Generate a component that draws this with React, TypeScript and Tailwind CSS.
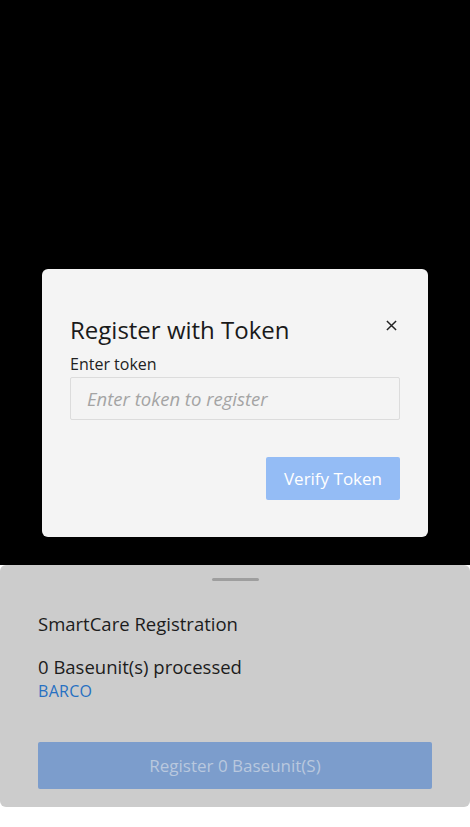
import React from 'react';

const App = () => {
  return (
    <div className="h-[827px] w-[470px] flex flex-col bg-white" style={{ fontFamily: '"Open Sans", "Noto Sans", sans-serif' }}>
      <div className="bg-black px-[42px] pt-[269px] pb-[28px]">
        <div className="bg-[#f4f4f4] rounded-[6px] h-[268px] px-[28px] pt-[45px]">
          <div className="flex items-start justify-between">
            <h2 className="text-[24px] leading-[32px] text-[#1a1a1a]">Register with Token</h2>
            <button className="mt-[6px] mr-[3px] text-[#222]">
              <svg width="11" height="11" viewBox="0 0 12 12" stroke="currentColor" strokeWidth="1.6">
                <path d="M1 1l10 10M11 1L1 11" />
              </svg>
            </button>
          </div>
          <label className="block mt-[7px] text-[16px] leading-[22px] text-[#222]">Enter token</label>
          <div className="mt-[2px] h-[43px] border border-[#dcdcdc] rounded-[2px] bg-[#f4f4f4] flex items-center px-[16px]">
            <span className="italic text-[18.5px] text-[#a4a4a4]">Enter token to register</span>
          </div>
          <div className="flex justify-end mt-[37px]">
            <button className="w-[134px] h-[43px] rounded-[2px] bg-[#94bcf5] text-white text-[17px]">Verify Token</button>
          </div>
        </div>
      </div>
      <div className="bg-[#cccccc] rounded-b-[6px] rounded-t-[6px] h-[242px] px-[38px] flex flex-col">
        <div className="self-center mt-[13px] w-[47px] h-[3px] rounded-full bg-[#9e9e9e]" />
        <p className="mt-[30px] text-[18.5px] leading-[26px] text-[#1c1c1c]">SmartCare Registration</p>
        <p className="mt-[17px] text-[18.5px] leading-[26px] text-[#1c1c1c]">0 Baseunit(s) processed</p>
        <p className="mt-[1px] text-[16px] leading-[20px] text-[#2770c2] tracking-[0.3px]">BARCO</p>
        <button className="mt-[41px] h-[47px] w-full rounded-[2px] bg-[#7c9dcc] text-[#b9c8de] text-[17px]">Register 0 Baseunit(S)</button>
      </div>
      <div className="flex-1 bg-white" />
    </div>
  );
};

export default App;
